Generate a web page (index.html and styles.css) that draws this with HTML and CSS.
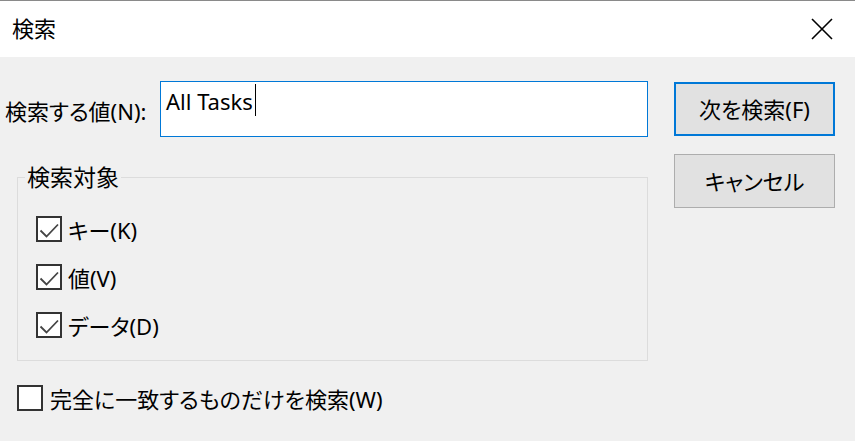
FILE: index.html
```html
<!DOCTYPE html>
<html>
<head>
    <title>検索</title>
    <link rel="stylesheet" href="styles.css">
</head>
<body>
    <div class="dialog">
        <div class="titlebar">
            <span class="title">検索</span>
            <svg class="close-icon" width="22" height="22" viewBox="0 0 22 22">
                <path d="M1 1 L21 21 M21 1 L1 21" stroke="#000" stroke-width="1.6" fill="none"/>
            </svg>
        </div>

        <div class="content">
            <div class="left-col">
                <div class="search-row">
                    <label class="search-label">検索する値(N):</label>
                    <div class="search-input">All Tasks<span class="caret"></span></div>
                </div>

                <fieldset class="group">
                    <legend>検索対象</legend>
                    <div class="check-row">
                        <svg class="checkbox" width="26" height="26" viewBox="0 0 26 26">
                            <rect x="1" y="1" width="24" height="24" fill="#fff" stroke="#333" stroke-width="2"/>
                            <polyline points="4.5,14.5 10.5,20.5 22,8.5" fill="none" stroke="#444" stroke-width="1.8"/>
                        </svg>
                        <span>キー(K)</span>
                    </div>
                    <div class="check-row">
                        <svg class="checkbox" width="26" height="26" viewBox="0 0 26 26">
                            <rect x="1" y="1" width="24" height="24" fill="#fff" stroke="#333" stroke-width="2"/>
                            <polyline points="4.5,14.5 10.5,20.5 22,8.5" fill="none" stroke="#444" stroke-width="1.8"/>
                        </svg>
                        <span>値(V)</span>
                    </div>
                    <div class="check-row">
                        <svg class="checkbox" width="26" height="26" viewBox="0 0 26 26">
                            <rect x="1" y="1" width="24" height="24" fill="#fff" stroke="#333" stroke-width="2"/>
                            <polyline points="4.5,14.5 10.5,20.5 22,8.5" fill="none" stroke="#444" stroke-width="1.8"/>
                        </svg>
                        <span>データ(D)</span>
                    </div>
                </fieldset>

                <div class="check-row whole-match">
                    <svg class="checkbox" width="26" height="26" viewBox="0 0 26 26">
                        <rect x="1" y="1" width="24" height="24" fill="#fff" stroke="#333" stroke-width="2"/>
                    </svg>
                    <span>完全に一致するものだけを検索(W)</span>
                </div>
            </div>

            <div class="right-col">
                <button class="btn btn-default">次を検索(F)</button>
                <button class="btn">キャンセル</button>
            </div>
        </div>
    </div>
</body>
</html>
```

FILE: styles.css
```css
* {
    margin: 0;
    padding: 0;
    box-sizing: border-box;
}

body {
    background: #f0f0f0;
    font-family: "Noto Sans", "Noto Sans CJK JP", sans-serif;
    font-size: 22px;
    font-feature-settings: "palt";
    color: #000;
    width: 855px;
    height: 441px;
    overflow: hidden;
}

.titlebar {
    height: 57px;
    background: #fff;
    border-top: 1px solid #8a8a8a;
    display: flex;
    align-items: center;
    justify-content: space-between;
    padding: 0 22px 0 12px;
}

.title {
    line-height: 1;
    margin-top: -2px;
}

.content {
    display: flex;
    padding: 24px 0 0 5px;
}

.left-col {
    width: 643px;
}

.search-row {
    display: flex;
    align-items: center;
}

.search-label {
    width: 155px;
    padding-top: 2px;
}

.search-input {
    width: 488px;
    height: 56px;
    background: #fff;
    border: 1px solid #0078d7;
    padding: 4px 0 0 5px;
    line-height: 30px;
    display: flex;
    align-items: flex-start;
}

.caret {
    display: inline-block;
    width: 1px;
    height: 32px;
    background: #000;
    margin-left: 2px;
    margin-top: -2px;
}

.group {
    margin: 25px 0 0 12px;
    border: 1px solid #dcdcdc;
    padding: 24px 0 22px 18px;
}

.group legend {
    margin-left: -11px;
    padding: 0 2px;
    font-size: 23px;
    line-height: 30px;
    font-feature-settings: normal;
}

.check-row {
    display: flex;
    align-items: center;
    gap: 6px;
    height: 26px;
    line-height: 1;
}

.check-row + .check-row {
    margin-top: 22px;
}

.check-row span {
    margin-top: 2px;
}

.checkbox {
    flex-shrink: 0;
}

.whole-match {
    margin: 24px 0 0 12px;
    gap: 7px;
}

.right-col {
    margin-left: 26px;
    padding-top: 1px;
    display: flex;
    flex-direction: column;
    gap: 18px;
}

.btn {
    width: 161px;
    height: 54px;
    background: #e1e1e1;
    border: 1px solid #adadad;
    font-family: inherit;
    font-size: 22px;
    font-feature-settings: "palt";
    color: #000;
    line-height: 1;
}

.btn-default {
    border: 2px solid #0078d7;
}
```
